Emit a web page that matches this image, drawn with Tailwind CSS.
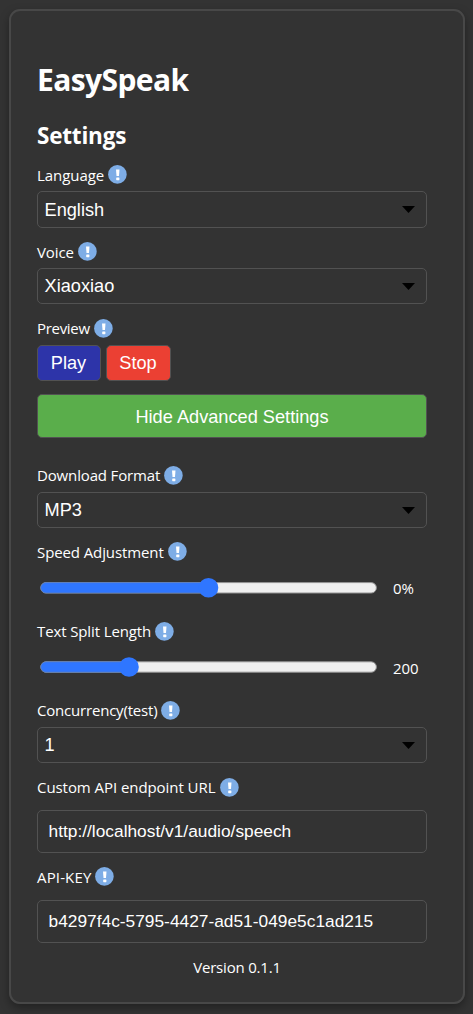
<!DOCTYPE html>
<html lang="en">
<head>
<meta charset="utf-8">
<title>EasySpeak</title>
<script src="https://cdn.jsdelivr.net/npm/@tailwindcss/browser@4"></script>
</head>
<body class="bg-[#333333] text-white h-[1014px] overflow-hidden pt-[9px] pl-[9px] font-['Open_Sans','Noto_Sans',sans-serif]">
<svg class="hidden">
  <symbol id="info" viewBox="0 0 19 19"><circle cx="9.4" cy="9.4" r="9.3" fill="#7eade6"/><path d="M8 4.4h3.5l-.5 6.6H8.5z" fill="#fff"/><rect x="8.2" y="12.4" width="3.2" height="2.8" rx=".6" fill="#fff"/></symbol>
  <symbol id="arrow" viewBox="0 0 13 7"><path d="M0 0h13L6.5 7z" fill="#000"/></symbol>
</svg>
<main class="w-[456px] h-[995px] rounded-[11px] border-2 border-[#484848] shadow-[0_4px_10px_rgba(0,0,0,0.35)] pl-[26px] pr-[36px] pt-[46px] flex flex-col">
  <h1 class="h-[46px] leading-[46px] text-[30px] font-bold tracking-[-0.6px] whitespace-nowrap">EasySpeak</h1>
  <h2 class="mt-[16px] h-[34px] leading-[34px] text-[22.5px] font-bold tracking-[-0.2px] whitespace-nowrap">Settings</h2>

  <div class="mt-[9px] h-[24px] flex items-center text-[15px]"><span class="w-[71px] pt-[2px] whitespace-nowrap tracking-[-0.05px]">Language</span><svg class="size-[19px]"><use href="#info"/></svg></div>
  <div class="mt-[5px] h-[37px] shrink-0 border border-[#525252] rounded-[5px] pl-[6.5px] pr-[11px] flex items-center justify-between font-['Liberation_Sans',sans-serif] text-[18.2px]"><span class="pt-[2px]">English</span><svg class="w-[13px] h-[7px]"><use href="#arrow"/></svg></div>

  <div class="mt-[11px] h-[24px] flex items-center text-[15px]"><span class="w-[41px] pt-[2px] whitespace-nowrap tracking-[-0.1px]">Voice</span><svg class="size-[19px]"><use href="#info"/></svg></div>
  <div class="mt-[5px] h-[36px] shrink-0 border border-[#525252] rounded-[5px] pl-[6.5px] pr-[11px] flex items-center justify-between font-['Liberation_Sans',sans-serif] text-[18.2px]"><span class="pt-[2px]">Xiaoxiao</span><svg class="w-[13px] h-[7px]"><use href="#arrow"/></svg></div>

  <div class="mt-[12px] h-[24px] flex items-center text-[15px]"><span class="w-[57px] whitespace-nowrap tracking-[-0.3px]">Preview</span><svg class="size-[19px]"><use href="#info"/></svg></div>
  <div class="mt-[5px] h-[36px] flex gap-[5px] font-['Liberation_Sans',sans-serif] text-[18.2px]">
    <button class="w-[64px] pt-[2px] pr-px border border-[#525252] rounded-[5px] bg-[#2d34a9]">Play</button>
    <button class="w-[65px] pt-[2px] pr-px border border-[#525252] rounded-[5px] bg-[#eb4033]">Stop</button>
  </div>
  <button class="mt-[13px] h-[44px] pt-[3px] shrink-0 border border-[#525252] rounded-[5px] bg-[#5aae4b] font-['Liberation_Sans',sans-serif] text-[18.2px]">Hide Advanced Settings</button>

  <div class="mt-[25px] h-[24px] flex items-center text-[15px]"><span class="w-[127px] whitespace-nowrap tracking-[-0.15px]">Download Format</span><svg class="size-[19px]"><use href="#info"/></svg></div>
  <div class="mt-[5px] h-[36px] shrink-0 border border-[#525252] rounded-[5px] pl-[6.5px] pr-[11px] flex items-center justify-between font-['Liberation_Sans',sans-serif] text-[18.2px]"><span class="pt-[2px]">MP3</span><svg class="w-[13px] h-[7px]"><use href="#arrow"/></svg></div>

  <div class="mt-[11px] h-[24px] flex items-center text-[15px]"><span class="w-[131px] pt-[2px] whitespace-nowrap tracking-[-0.1px]">Speed Adjustment</span><svg class="size-[19px]"><use href="#info"/></svg></div>
  <div class="mt-[15px] h-[20px] flex items-center text-[15px]"><svg class="w-[343px] h-[20px]" viewBox="0 0 343 20"><rect x="3.8" y="4.6" width="335.6" height="10.4" rx="5.2" fill="#efefef" stroke="#929292"/><path d="M9 4.6H171v10.4H9a5.2 5.2 0 0 1 0-10.4z" fill="#2f76ff" stroke="#5d7db8" stroke-width=".8"/><circle cx="171.5" cy="9.8" r="9.8" fill="#2f76ff"/></svg><span class="ml-[13px] tracking-[-0.1px]">0%</span></div>

  <div class="mt-[21px] h-[24px] flex items-center text-[15px]"><span class="w-[118px] whitespace-nowrap tracking-[-0.12px]">Text Split Length</span><svg class="size-[19px]"><use href="#info"/></svg></div>
  <div class="mt-[14px] h-[20px] flex items-center text-[15px]"><svg class="w-[343px] h-[20px]" viewBox="0 0 343 20"><rect x="3.8" y="4.8" width="335.6" height="10.4" rx="5.2" fill="#efefef" stroke="#929292"/><path d="M9 4.8H92v10.4H9a5.2 5.2 0 0 1 0-10.4z" fill="#2f76ff" stroke="#5d7db8" stroke-width=".8"/><circle cx="92" cy="10" r="9.8" fill="#2f76ff"/></svg><span class="ml-[13px] pt-[2px] tracking-[-0.1px]">200</span></div>

  <div class="mt-[21px] h-[24px] flex items-center text-[15px]"><span class="w-[124px] whitespace-nowrap tracking-[-0.2px]">Concurrency(test)</span><svg class="size-[19px]"><use href="#info"/></svg></div>
  <div class="mt-[5px] h-[36px] shrink-0 border border-[#525252] rounded-[5px] pl-[6.5px] pr-[11px] flex items-center justify-between font-['Liberation_Sans',sans-serif] text-[18.2px]"><span class="pt-[2px]">1</span><svg class="w-[13px] h-[7px]"><use href="#arrow"/></svg></div>

  <div class="mt-[12px] h-[24px] flex items-center text-[15px]"><span class="w-[183px] whitespace-nowrap tracking-[-0.06px]">Custom API endpoint URL</span><svg class="size-[19px]"><use href="#info"/></svg></div>
  <div class="mt-[11px] h-[43px] shrink-0 border border-[#525252] rounded-[5px] pl-[10.5px] flex items-center font-['Liberation_Sans',sans-serif] text-[17.33px]">http://localhost/v1/audio/speech</div>

  <div class="mt-[11px] h-[24px] flex items-center text-[15px]"><span class="w-[58px] pt-[2px] whitespace-nowrap tracking-[0.15px]">API-KEY</span><svg class="size-[19px]"><use href="#info"/></svg></div>
  <div class="mt-[12px] h-[43px] shrink-0 border border-[#525252] rounded-[5px] pl-[10.5px] flex items-center font-['Liberation_Sans',sans-serif] text-[17.33px]">b4297f4c-5795-4427-ad51-049e5c1ad215</div>

  <p class="mt-[12px] h-[24px] leading-[24px] text-[15px] text-center pl-[10px] tracking-[-0.2px]">Version 0.1.1</p>
</main>
</body>
</html>
